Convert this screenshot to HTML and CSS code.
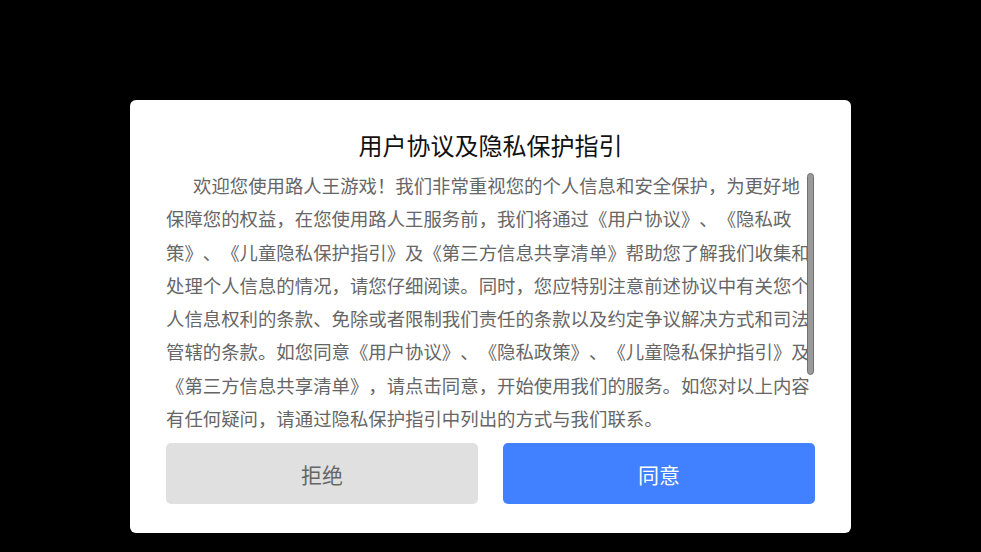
FILE: index.html
```html
<!DOCTYPE html>
<html lang="zh-CN">
<head>
<meta charset="utf-8">
<title>用户协议及隐私保护指引</title>
<link rel="stylesheet" href="styles.css">
</head>
<body>
<div class="screen">
  <div class="dialog">
    <h1 class="title">用户协议及隐私保护指引</h1>
    <div class="content">
      <p class="text">欢迎您使用路人王游戏！我们非常重视您的个人信息和安全保护，为更好地<br>保障您的权益，在您使用路人王服务前，我们将通过《用户协议》、《隐私政<br>策》、《儿童隐私保护指引》及《第三方信息共享清单》帮助您了解我们收集和<br>处理个人信息的情况，请您仔细阅读。同时，您应特别注意前述协议中有关您个<br>人信息权利的条款、免除或者限制我们责任的条款以及约定争议解决方式和司法<br>管辖的条款。如您同意《用户协议》、《隐私政策》、《儿童隐私保护指引》及<br>《第三方信息共享清单》，请点击同意，开始使用我们的服务。如您对以上内容<br>有任何疑问，请通过隐私保护指引中列出的方式与我们联系。</p>
      <div class="thumb"></div>
    </div>
    <div class="actions">
      <button class="btn btn-reject">拒绝</button>
      <button class="btn btn-agree">同意</button>
    </div>
  </div>
</div>
</body>
</html>
```
FILE: styles.css
```css
* { box-sizing: border-box; }
html, body { margin: 0; padding: 0; background: #000; }
body {
  font-family: "Noto Sans CJK SC", "Noto Sans", sans-serif;
  text-spacing-trim: space-all;
}
.screen {
  width: 981px;
  height: 552px;
  display: flex;
  justify-content: center;
  align-items: flex-start;
  padding-top: 100px;
}
.dialog {
  width: 721px;
  height: 433px;
  background: #fff;
  border-radius: 6px;
  padding: 0 36px 29px;
  display: flex;
  flex-direction: column;
}
.title {
  margin: 27px 0 6px;
  height: 36px;
  line-height: 36px;
  font-size: 24px;
  font-weight: 400;
  color: #111;
  text-align: center;
}
.content {
  position: relative;
  height: 267px;
  overflow: hidden;
}
.text {
  margin: 0;
  font-size: 18.4px;
  line-height: 33.3px;
  color: #666;
  white-space: nowrap;
  text-indent: 27px;
  text-spacing-trim: space-all;
}
.thumb {
  position: absolute;
  left: 641px;
  top: 4px;
  width: 7px;
  height: 202px;
  background: #9a9a9a;
  border: 1px solid #707070;
  border-radius: 4px;
}
.actions {
  margin-top: 7px;
  display: flex;
  gap: 25px;
}
.btn {
  flex: 1;
  height: 61px;
  border: none;
  border-radius: 5px;
  font-family: inherit;
  font-size: 21px;
  padding: 0;
}
.btn-reject {
  background: #e0e0e0;
  color: #666;
}
.btn-agree {
  background: #4181ff;
  color: #fff;
}
```
